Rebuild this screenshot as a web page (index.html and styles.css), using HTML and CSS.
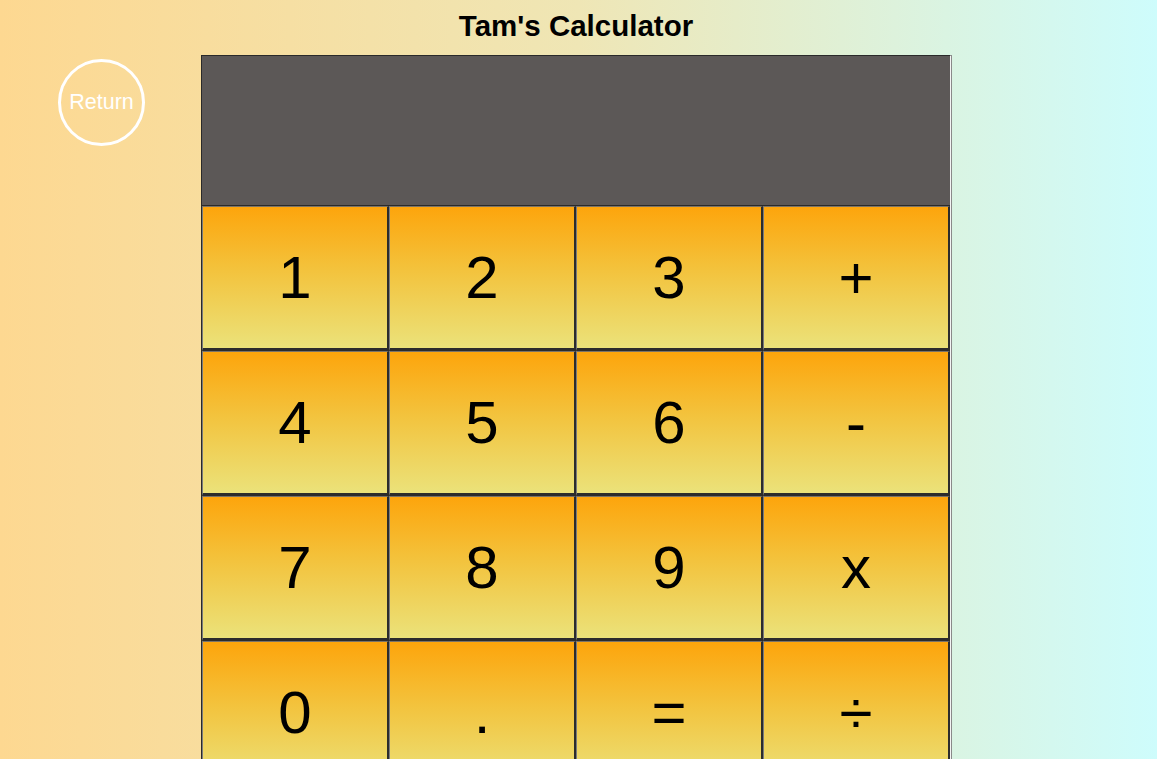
FILE: index.html
```html
<!DOCTYPE html>
<html>
<head>
<meta charset="utf-8">
<link rel="stylesheet" href="styles.css">
</head>
<body>
<div class="page">
  <h1 class="title">Tam's Calculator</h1>
  <div class="row">
    <button class="return">Return</button>
    <div class="calc">
      <div class="display"></div>
      <div class="keys">
        <button class="key">1</button>
        <button class="key">2</button>
        <button class="key">3</button>
        <button class="key">+</button>
        <button class="key">4</button>
        <button class="key">5</button>
        <button class="key">6</button>
        <button class="key">-</button>
        <button class="key">7</button>
        <button class="key">8</button>
        <button class="key">9</button>
        <button class="key">x</button>
        <button class="key">0</button>
        <button class="key">.</button>
        <button class="key">=</button>
        <button class="key">÷</button>
      </div>
    </div>
  </div>
</div>
</body>
</html>
```
FILE: styles.css
```css
html, body {
  margin: 0;
  padding: 0;
  height: 100%;
  overflow: hidden;
}
body {
  background: linear-gradient(to right, #fdd891 0%, #efe6b5 50%, #cefcfc 100%);
  font-family: "Liberation Sans", Arial, sans-serif;
}
.page {
  width: 1152px;
}
.title {
  margin: 0;
  height: 55px;
  line-height: 51px;
  text-align: center;
  font-size: 29.5px;
  font-weight: bold;
  color: #000;
}
.row {
  display: flex;
  align-items: flex-start;
  padding-left: 58px;
}
.return {
  margin-top: 4px;
  width: 87px;
  height: 87px;
  border-radius: 50%;
  border: 3px solid #fff;
  background: transparent;
  color: #fff;
  font-family: "Liberation Sans", Arial, sans-serif;
  font-size: 21.5px;
  padding: 0;
  margin-right: 56px;
}
.calc {
  width: 748px;
  border: 1px solid #2a2a2a;
  border-right: 1px solid #f4f4f4;
  box-shadow: 1px 0 0 #8a8a8a;
  background: #5b5857;
}
.display {
  height: 149px;
  background: #5c5857;
  border-bottom: 1px solid #2a2a2a;
}
.keys {
  display: grid;
  grid-template-columns: repeat(4, 187px);
  grid-auto-rows: 145px;
}
.key {
  margin: 0;
  padding: 0;
  border-top: 1px solid #7b7469;
  border-left: 1px solid #7b7b7b;
  border-right: 2px solid #2c2c2c;
  border-bottom: 3px solid #2c2c2c;
  background: linear-gradient(to bottom, #fda50c 0%, #f3c33d 45%, #ebe27a 100%);
  font-family: "Liberation Sans", Arial, sans-serif;
  font-size: 60px;
  color: #000;
}
```
